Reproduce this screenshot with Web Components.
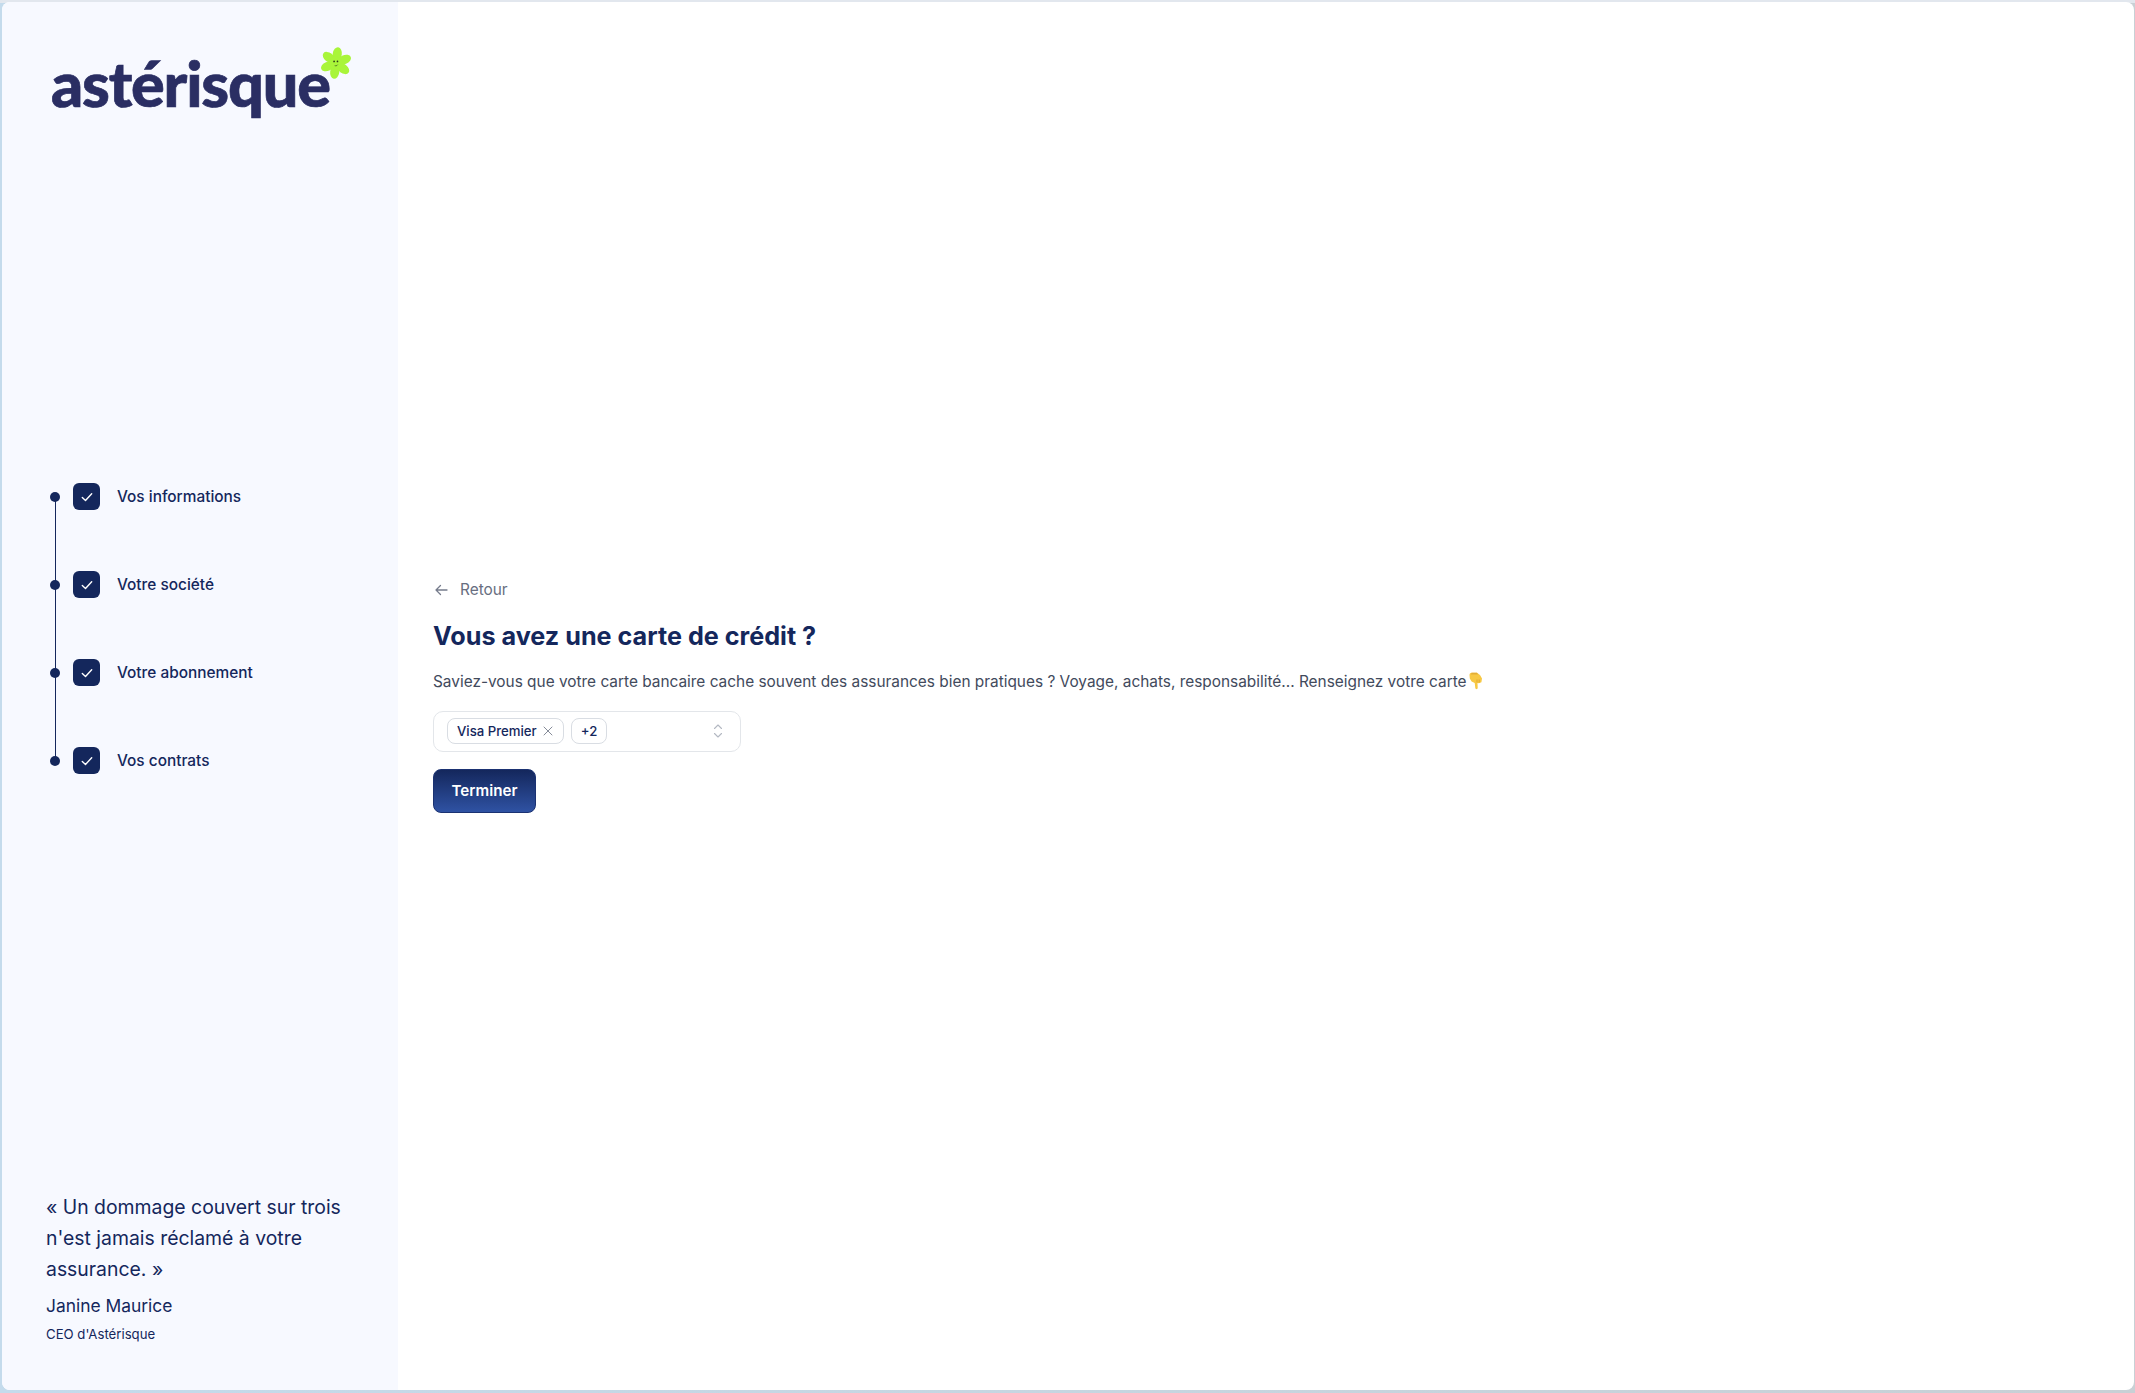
<!doctype html>
<html lang="fr">
<head>
<meta charset="utf-8">
<title>Astérisque</title>
<style>
  html, body { margin: 0; height: 100%; }
  body {
    font-family: Inter, "Liberation Sans", sans-serif;
    background:
      linear-gradient(180deg, #e2e7ee 0 3px, transparent 3px),
      linear-gradient(90deg, #c4dbec 0, #c8d0d5 100%);
  }
</style>
</head>
<body>
<app-shell>
  <side-bar slot="side">
    <brand-logo slot="logo"></brand-logo>
    <step-list slot="steps">
      <step-item>Vos informations</step-item>
      <step-item>Votre société</step-item>
      <step-item>Votre abonnement</step-item>
      <step-item last>Vos contrats</step-item>
    </step-list>
    <quote-block slot="quote" author="Janine Maurice" role="CEO d'Astérisque">« Un dommage couvert sur trois n'est jamais réclamé à votre assurance. »</quote-block>
  </side-bar>
  <card-form slot="main">
    <back-link slot="back">Retour</back-link>
    <span slot="title">Vous avez une carte de crédit ?</span>
    <span slot="text">Saviez-vous que votre carte bancaire cache souvent des assurances bien pratiques ? Voyage, achats, responsabilité... Renseignez votre carte</span>
    <multi-select slot="select">
      <tag-chip removable>Visa Premier</tag-chip>
      <tag-chip>+2</tag-chip>
    </multi-select>
    <primary-button slot="action">Terminer</primary-button>
  </card-form>
</app-shell>

<script>
  class AppShell extends HTMLElement {
    constructor () {
      super()
      this.attachShadow({ mode: 'open' }).innerHTML = `
        <style>
          :host { display: block; height: 100vh; box-sizing: border-box; padding: 2px 1px 3px 2px; }
          .frame {
            display: flex;
            height: 100%;
            background: #fff;
            border-radius: 8px;
            overflow: hidden;
          }
          ::slotted([slot=side]) { flex: 0 0 396px; }
          ::slotted([slot=main]) { flex: 1; }
        </style>
        <div class="frame">
          <slot name="side"></slot>
          <slot name="main"></slot>
        </div>`
    }
  }

  class SideBar extends HTMLElement {
    constructor () {
      super()
      this.attachShadow({ mode: 'open' }).innerHTML = `
        <style>
          :host {
            display: flex;
            flex-direction: column;
            box-sizing: border-box;
            background: #f7f9ff;
            padding: 41px 40px 46px 44px;
          }
          .grow { flex: 1; }
        </style>
        <slot name="logo"></slot>
        <slot name="steps"></slot>
        <div class="grow"></div>
        <slot name="quote"></slot>`
    }
  }

  class BrandLogo extends HTMLElement {
    constructor () {
      super()
      this.attachShadow({ mode: 'open' }).innerHTML = `
        <style>
          :host { display: block; position: relative; height: 80px; padding-left: 5px; }
          .word {
            display: block;
            font: 900 63px/80px Lato, "Liberation Sans", sans-serif;
            letter-spacing: -1.2px;
            color: #2a2e63;
            -webkit-text-stroke: .7px #2a2e63;
          }
          svg { position: absolute; left: 273px; top: 3px; }
        </style>
        <span class="word">astérisque</span>
        <svg width="34" height="34" viewBox="0 0 32 32">
          <g fill="#a9f53a" transform="rotate(8 16 16)">
            <ellipse cx="16" cy="7.500" rx="4.300" ry="6.500"/>
            <ellipse cx="16" cy="7.500" rx="4.300" ry="6.500" transform="rotate(60 16 16)"/>
            <ellipse cx="16" cy="7.500" rx="4.300" ry="6.500" transform="rotate(120 16 16)"/>
            <ellipse cx="16" cy="7.500" rx="4.300" ry="6.500" transform="rotate(180 16 16)"/>
            <ellipse cx="16" cy="7.500" rx="4.300" ry="6.500" transform="rotate(240 16 16)"/>
            <ellipse cx="16" cy="7.500" rx="4.300" ry="6.500" transform="rotate(300 16 16)"/>
            <circle cx="16" cy="16" r="6"/>
          </g>
          <circle cx="14.200" cy="14.500" r=".8" fill="#2c3a1a"/>
          <circle cx="17.400" cy="14.500" r=".8" fill="#2c3a1a"/>
          <path d="M14.800 18.500c1.200.3 2.200 0 2.800-.9" fill="none" stroke="#2c3a1a" stroke-width=".6"/>
        </svg>`
    }
  }

  class StepList extends HTMLElement {
    constructor () {
      super()
      this.attachShadow({ mode: 'open' }).innerHTML = `
        <style>
          :host { display: flex; flex-direction: column; gap: 61px; margin-top: 360px; padding-left: 4px; }
        </style>
        <slot></slot>`
    }
  }

  class StepItem extends HTMLElement {
    constructor () {
      super()
      this.attachShadow({ mode: 'open' }).innerHTML = `
        <style>
          :host {
            display: flex;
            align-items: center;
            position: relative;
            height: 27px;
            font: 500 15.400px Inter, sans-serif;
            color: #14275c;
          }
          .dot {
            width: 10px;
            height: 10px;
            border-radius: 50%;
            background: #14275c;
            margin-right: 13px;
            flex: none;
          }
          .line {
            position: absolute;
            left: 4.500px;
            top: 14px;
            height: 88px;
            width: 1px;
            background: #14275c;
          }
          :host([last]) .line { display: none; }
          .box {
            width: 27px;
            height: 27px;
            border-radius: 6px;
            background: #14275c;
            display: grid;
            place-items: center;
            margin-right: 17px;
            flex: none;
          }
        </style>
        <span class="line"></span>
        <span class="dot"></span>
        <span class="box">
          <svg width="14" height="14" viewBox="0 0 14 14" fill="none" stroke="#fff" stroke-width="1.400" stroke-linecap="round" stroke-linejoin="round"><path d="M2.300 7.400l3.200 3L11.700 3.700"/></svg>
        </span>
        <slot></slot>`
    }
  }

  class QuoteBlock extends HTMLElement {
    constructor () {
      super()
      this.attachShadow({ mode: 'open' }).innerHTML = `
        <style>
          :host { display: block; color: #14275c; }
          p { margin: 0; font: 400 19.400px/31px Inter, sans-serif; }
          .author { margin-top: 8px; font: 400 17.400px/26px Inter, sans-serif; }
          .role { margin-top: 5px; font: 400 13.200px/20px Inter, sans-serif; }
        </style>
        <p><slot></slot></p>
        <div class="author"></div>
        <div class="role"></div>`
    }

    connectedCallback () {
      this.shadowRoot.querySelector('.author').textContent = this.getAttribute('author')
      this.shadowRoot.querySelector('.role').textContent = this.getAttribute('role')
    }
  }

  class CardForm extends HTMLElement {
    constructor () {
      super()
      this.attachShadow({ mode: 'open' }).innerHTML = `
        <style>
          :host {
            display: flex;
            flex-direction: column;
            justify-content: center;
            align-items: flex-start;
            padding-left: 35px;
          }
          h1 { margin: 20px 0 0; font: 700 25.200px/32px Inter, sans-serif; color: #14275c; }
          p { margin: 19px 0 0; font: 400 15.400px/22px Inter, sans-serif; color: #424a5c; display: flex; align-items: center; }
          .emoji { margin-left: 1px; }
          .sel { margin-top: 18px; display: block; }
          .act { margin-top: 17px; display: block; }
        </style>
        <slot name="back"></slot>
        <h1><slot name="title"></slot></h1>
        <p><slot name="text"></slot>
          <svg class="emoji" width="15" height="19" viewBox="0 0 15 19">
            <path d="M1.500 3c0-1.400 1-2.200 2-2.200h5.500l3 2.200 2 3.500-.6 3.800-2.500 1-1.400-.2.200 5c0 1.500-2.300 1.500-2.400 0L6.700 11 3.600 9.500 1.800 6.500z" fill="#f7c844"/>
            <path d="M3.500 .8h5.500l1 1.600H3z" fill="#e3ad36"/>
            <path d="M9 7.500v3M11.200 7.500v3" stroke="#d69b2d" stroke-width=".7" fill="none"/>
          </svg>
        </p>
        <div class="sel"><slot name="select"></slot></div>
        <div class="act"><slot name="action"></slot></div>`
    }
  }

  class BackLink extends HTMLElement {
    constructor () {
      super()
      this.attachShadow({ mode: 'open' }).innerHTML = `
        <style>
          :host {
            display: inline-flex;
            align-items: center;
            gap: 11px;
            height: 20px;
            font: 400 15.400px Inter, sans-serif;
            color: #686e80;
          }
        </style>
        <svg width="16" height="16" viewBox="0 0 16 16" fill="none" stroke="#767c8c" stroke-width="1.300" stroke-linecap="round" stroke-linejoin="round"><path d="M14 8H3M7.500 3.500L3 8l4.500 4.500"/></svg>
        <slot></slot>`
    }
  }

  class MultiSelect extends HTMLElement {
    constructor () {
      super()
      this.attachShadow({ mode: 'open' }).innerHTML = `
        <style>
          :host {
            display: flex;
            align-items: center;
            gap: 7px;
            box-sizing: border-box;
            width: 308px;
            height: 41px;
            padding: 0 15px 0 13px;
            background: #fff;
            border: 1px solid #e3e6ea;
            border-radius: 10px;
          }
          svg { margin-left: auto; }
        </style>
        <slot></slot>
        <svg width="14" height="18" viewBox="0 0 14 18" fill="none" stroke="#b3b8c2" stroke-width="1.100" stroke-linecap="round" stroke-linejoin="round"><path d="M3.500 6.500L7 3l3.500 3.500M3.500 11.500L7 15l3.500-3.500"/></svg>`
    }
  }

  class TagChip extends HTMLElement {
    constructor () {
      super()
      this.attachShadow({ mode: 'open' }).innerHTML = `
        <style>
          :host {
            display: inline-flex;
            align-items: center;
            gap: 6px;
            box-sizing: border-box;
            height: 26px;
            padding: 0 9px;
            border: 1px solid #d9dde3;
            border-radius: 8px;
            font: 500 13.200px Inter, sans-serif;
            color: #14275c;
          }
          svg { display: none; }
          :host([removable]) { padding-right: 10px; }
          :host([removable]) svg { display: block; }
        </style>
        <slot></slot>
        <svg width="10" height="10" viewBox="0 0 10 10" stroke="#858b98" stroke-width="1" stroke-linecap="round"><path d="M1 1l8 8M9 1L1 9"/></svg>`
    }
  }

  class PrimaryButton extends HTMLElement {
    constructor () {
      super()
      this.attachShadow({ mode: 'open' }).innerHTML = `
        <style>
          :host {
            display: inline-flex;
            align-items: center;
            justify-content: center;
            box-sizing: border-box;
            width: 103px;
            height: 44px;
            border: 1px solid #1b3272;
            border-radius: 8px;
            background: linear-gradient(180deg, #14275c 0%, #2f52a3 100%);
            font: 600 15.200px Inter, sans-serif;
            color: #fff;
          }
        </style>
        <slot></slot>`
    }
  }

  customElements.define('app-shell', AppShell)
  customElements.define('side-bar', SideBar)
  customElements.define('brand-logo', BrandLogo)
  customElements.define('step-list', StepList)
  customElements.define('step-item', StepItem)
  customElements.define('quote-block', QuoteBlock)
  customElements.define('card-form', CardForm)
  customElements.define('back-link', BackLink)
  customElements.define('multi-select', MultiSelect)
  customElements.define('tag-chip', TagChip)
  customElements.define('primary-button', PrimaryButton)
</script>
</body>
</html>
